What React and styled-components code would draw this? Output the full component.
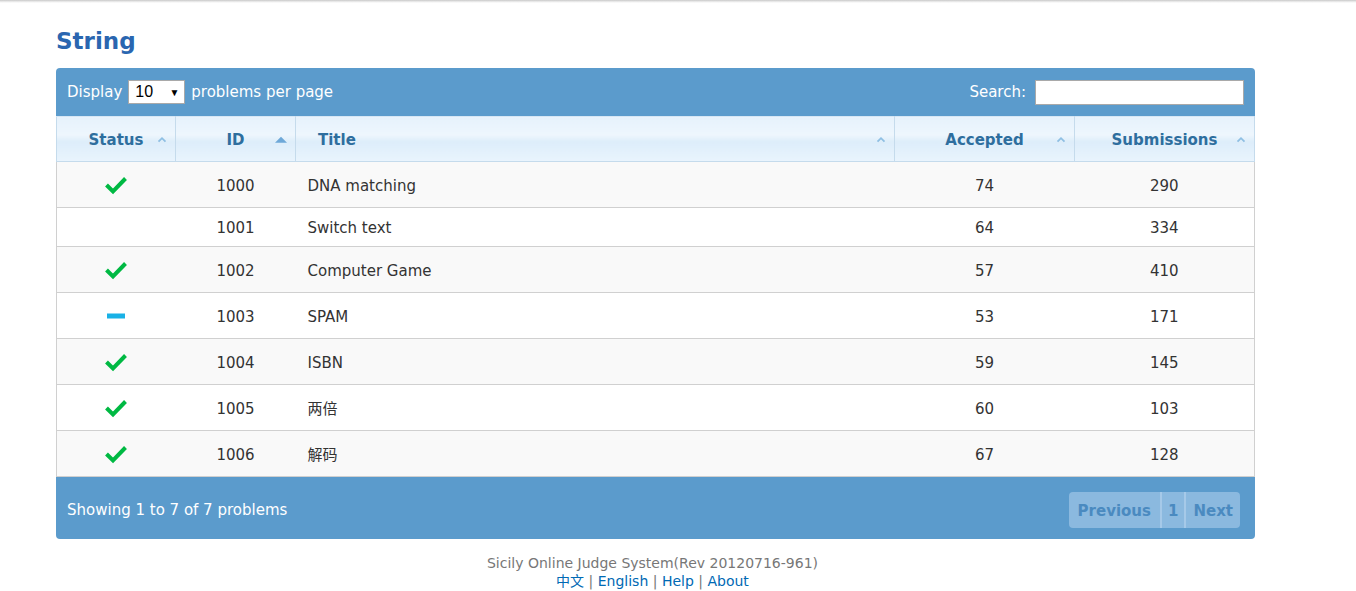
import React from "react";
import styled, { createGlobalStyle } from "styled-components";

const Global = createGlobalStyle`
  html, body { margin: 0; padding: 0; background: #fff; }
  body { font-family: "DejaVu Sans", Verdana, sans-serif; color: #333; }
  * { box-sizing: border-box; }
`;

const TopShade = styled.div`
  height: 3px;
  background: linear-gradient(#c8c8c8, #eeeeee 60%, #ffffff);
`;

const Page = styled.div`
  width: 1199px;
  margin-left: 56px;
  padding-top: 24px;
`;

const Heading = styled.h1`
  margin: 0 0 13px 0;
  font-size: 23px;
  font-weight: bold;
  color: #2a66b0;
  line-height: 28px;
`;

const Panel = styled.div`
  border-radius: 4px;
  overflow: hidden;
`;

const Bar = styled.div`
  display: flex;
  align-items: center;
  justify-content: space-between;
  background: #5b9bcc;
  color: #fff;
  font-size: 15px;
  padding: ${(p) => p.$pt || 0}px 11px 0 11px;
  height: ${(p) => p.$h}px;
`;

const Group = styled.div`
  display: flex;
  align-items: center;
  gap: 6px;
`;

const SelectBox = styled.div`
  width: 57px;
  height: 24px;
  background: #fff;
  border: 1px solid #a9a9a9;
  color: #000;
  display: flex;
  align-items: center;
  justify-content: space-between;
  padding: 0 5px 0 6px;
  font-family: "Liberation Sans", Arial, sans-serif;
  font-size: 16px;
`;

const Arrow = styled.span`
  font-size: 10px;
`;

const SearchInput = styled.div`
  width: 209px;
  height: 25px;
  background: #fff;
  border: 1px solid #a9a9a9;
`;

const Table = styled.table`
  width: 100%;
  border-collapse: collapse;
  table-layout: fixed;
  border-left: 1px solid #d0d0d0;
  border-right: 1px solid #d0d0d0;
`;

const Th = styled.th`
  position: relative;
  height: 45px;
  padding: 2px 22px 0 22px;
  font-size: 15px;
  font-weight: bold;
  color: #2e6e9e;
  text-align: ${(p) => p.$align || "center"};
  border: 1px solid #c5dbec;
  border-top-color: #d6e6f4;
  background: linear-gradient(#e6f2fc 0%, #eef6fd 40%, #ddedfa 55%, #e9f4fd 100%);
`;

const SortIcon = styled.span`
  position: absolute;
  right: 8px;
  top: 50%;
  transform: translateY(-40%);
  display: flex;
`;

const Tr = styled.tr`
  background: ${(p) => (p.$odd ? "#f9f9f9" : "#ffffff")};
  border-bottom: 1px solid #d0d0d0;
`;

const Td = styled.td`
  padding: 10px 12px;
  font-size: 15px;
  line-height: 18px;
  color: #333;
  text-align: ${(p) => p.$align || "center"};
  vertical-align: middle;
  font-family: "DejaVu Sans", "Noto Sans CJK SC", sans-serif;
`;

const Text = styled.span`
  position: relative;
  top: 1px;
`;

const IconWrap = styled.div`
  height: 25px;
  display: flex;
  align-items: center;
  justify-content: center;
`;

const Pager = styled.div`
  display: flex;
  height: 36px;
  border-radius: 4px;
  background: #8bb9df;
  overflow: hidden;
  margin-right: 4px;
`;

const PageBtn = styled.div`
  display: flex;
  align-items: center;
  padding: 1px ${(p) => p.$pad}px 0 ${(p) => p.$pad}px;
  font-size: 15px;
  font-weight: bold;
  color: #4a8ac0;
  border-left: ${(p) => (p.$first ? "none" : "2px solid #a6c9e8")};
`;

const Footer = styled.div`
  text-align: center;
  font-size: 14px;
  line-height: 18px;
  color: #777;
  padding-top: 15px;
  margin-left: -6px;
`;

const Link = styled.a`
  color: #0069b4;
  text-decoration: none;
  font-family: "DejaVu Sans", "Noto Sans CJK SC", sans-serif;
`;

const Check = () => (
  <svg width="24" height="20" viewBox="0 0 24 20">
    <polyline points="2.5,10 9,16.5 21.5,3.5" fill="none" stroke="#00b943" strokeWidth="4" />
  </svg>
);

const Dash = () => (
  <svg width="18" height="6" viewBox="0 0 18 6">
    <rect x="0" y="0.5" width="18" height="5" fill="#19b1e6" />
  </svg>
);

const Chevron = () => (
  <svg width="10" height="7" viewBox="0 0 10 7">
    <polyline points="1.5,5.5 5,2 8.5,5.5" fill="none" stroke="#8fbfe3" strokeWidth="1.8" />
  </svg>
);

const Tri = () => (
  <svg width="12" height="7" viewBox="0 0 12 7">
    <polygon points="0,6.5 6,0.5 12,6.5" fill="#6ea8d8" />
  </svg>
);

const rows = [
  ["ok", "1000", "DNA matching", 74, 290],
  [null, "1001", "Switch text", 64, 334],
  ["ok", "1002", "Computer Game", 57, 410],
  ["dash", "1003", "SPAM", 53, 171],
  ["ok", "1004", "ISBN", 59, 145],
  ["ok", "1005", "两倍", 60, 103],
  ["ok", "1006", "解码", 67, 128],
];

export default function App() {
  return (
    <>
      <Global />
      <TopShade />
      <Page>
        <Heading>String</Heading>
        <Panel>
          <Bar $h={48}>
            <Group>
              <span>Display</span>
              <SelectBox>
                <span>10</span>
                <Arrow>▼</Arrow>
              </SelectBox>
              <span>problems per page</span>
            </Group>
            <Group style={{ gap: 9 }}>
              <span>Search:</span>
              <SearchInput />
            </Group>
          </Bar>
          <Table>
            <colgroup>
              <col style={{ width: 119 }} />
              <col style={{ width: 120 }} />
              <col style={{ width: 599 }} />
              <col style={{ width: 180 }} />
              <col style={{ width: 180 }} />
            </colgroup>
            <thead>
              <tr>
                <Th>Status<SortIcon><Chevron /></SortIcon></Th>
                <Th>ID<SortIcon><Tri /></SortIcon></Th>
                <Th $align="left">Title<SortIcon><Chevron /></SortIcon></Th>
                <Th>Accepted<SortIcon><Chevron /></SortIcon></Th>
                <Th>Submissions<SortIcon><Chevron /></SortIcon></Th>
              </tr>
            </thead>
            <tbody>
              {rows.map((r, i) => (
                <Tr key={r[1]} $odd={i % 2 === 0}>
                  <Td>
                    {r[0] === "ok" && <IconWrap><Check /></IconWrap>}
                    {r[0] === "dash" && <IconWrap><Dash /></IconWrap>}
                  </Td>
                  <Td><Text>{r[1]}</Text></Td>
                  <Td $align="left"><Text>{r[2]}</Text></Td>
                  <Td><Text>{r[3]}</Text></Td>
                  <Td><Text>{r[4]}</Text></Td>
                </Tr>
              ))}
            </tbody>
          </Table>
          <Bar $h={62} $pt={4}>
            <span>Showing 1 to 7 of 7 problems</span>
            <Pager>
              <PageBtn $first $pad={9}>Previous</PageBtn>
              <PageBtn $pad={6}>1</PageBtn>
              <PageBtn $pad={7}>Next</PageBtn>
            </Pager>
          </Bar>
        </Panel>
        <Footer>
          <div>Sicily Online Judge System(Rev 20120716-961)</div>
          <div>
            <Link href="#">中文</Link> | <Link href="#">English</Link> | <Link href="#">Help</Link> | <Link href="#">About</Link>
          </div>
        </Footer>
      </Page>
    </>
  );
}
